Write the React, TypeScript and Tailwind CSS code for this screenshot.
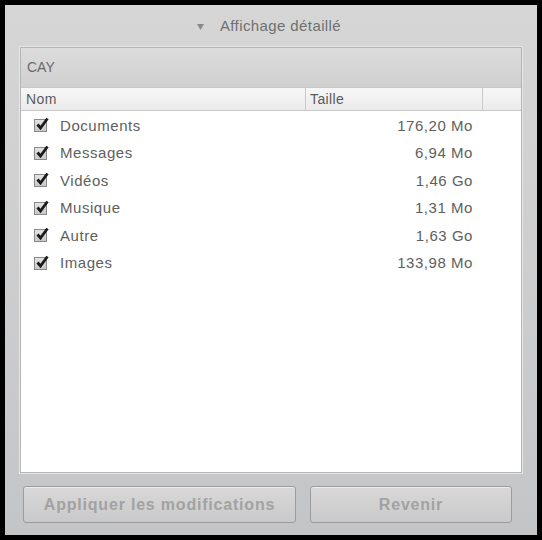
import React from 'react';

interface Row {
  name: string;
  size: string;
}

const rows: Row[] = [
  { name: 'Documents', size: '176,20 Mo' },
  { name: 'Messages', size: '6,94 Mo' },
  { name: 'Vidéos', size: '1,46 Go' },
  { name: 'Musique', size: '1,31 Mo' },
  { name: 'Autre', size: '1,63 Go' },
  { name: 'Images', size: '133,98 Mo' },
];

function CheckMark() {
  return (
    <span className="relative block h-[13px] w-[13px] border border-[#8a8a8a] bg-gradient-to-b from-[#e4e4e4] to-[#c8c8c8]">
      <svg
        className="absolute left-[1px] top-[-3px]"
        width="13"
        height="14"
        viewBox="0 0 13 14"
      >
        <path d="M1.5 7.5 L4.5 11 L11.5 1.5" fill="none" stroke="#1a1a1a" strokeWidth="2.8" strokeLinejoin="miter" />
      </svg>
    </span>
  );
}

function FileRow({ row }: { row: Row }) {
  return (
    <div className="flex h-[27.5px] items-center text-[15px] tracking-[0.55px] text-[#606060]">
      <div className="flex w-[285px] items-center">
        <span className="ml-[13px]">
          <CheckMark />
        </span>
        <span className="ml-[13px]">{row.name}</span>
      </div>
      <div className="w-[177px] pr-[10px] text-right">{row.size}</div>
    </div>
  );
}

function Button({ label, className }: { label: string; className: string }) {
  return (
    <button
      type="button"
      disabled
      className={`h-[37px] rounded-[3px] border border-[#9c9c9c] bg-gradient-to-b from-[#d9d9d9] to-[#c9c9cb] text-[16px] font-bold tracking-[0.8px] text-[#a2a2a2] shadow-[inset_0_1px_0_#ececec] ${className}`}
    >
      {label}
    </button>
  );
}

export default function App() {
  return (
    <div
      className="h-[540px] w-[542px] border-[5px] border-black bg-gradient-to-b from-[#d6d6d6] to-[#c4c5c7]"
      style={{ fontFamily: '"Liberation Sans", Arial, sans-serif' }}
    >
      <div className="flex h-[42px] items-center justify-center gap-[16px] pt-[1px] pr-[4px] text-[15px] tracking-[0.4px] text-[#707070]">
        <svg width="7" height="6" viewBox="0 0 7 6">
          <path d="M0 0 H7 L3.5 6 Z" fill="#8a8a8a" />
        </svg>
        <span>Affichage détaillé</span>
      </div>

      <div className="mx-[15px] flex h-[426px] flex-col border border-[#b4b4b4] bg-white shadow-[0_0_0_1px_#e6e6e6]">
        <div className="flex h-[39px] items-center bg-gradient-to-b from-[#dcdcdc] to-[#d0d0d0] pl-[6px] text-[14px] text-[#6a6a6a]">
          CAY
        </div>
        <div className="flex h-[24px] border-y border-[#c9c9c9] bg-gradient-to-b from-[#f7f7f7] to-[#ebebeb] text-[14px] tracking-[0.4px] text-[#5a5a5a]">
          <div className="flex w-[284px] items-center pl-[5px]">Nom</div>
          <div className="flex w-[177px] items-center border-l border-[#c9c9c9] pl-[4px]">Taille</div>
          <div className="flex-1 border-l border-[#c9c9c9]" />
        </div>
        <div className="flex-1 pt-[1px]">
          {rows.map((r) => (
            <FileRow key={r.name} row={r} />
          ))}
        </div>
      </div>

      <div className="mt-[13px] flex pl-[18px]">
        <Button label="Appliquer les modifications" className="w-[273px]" />
        <Button label="Revenir" className="ml-[14px] w-[202px]" />
      </div>
    </div>
  );
}
